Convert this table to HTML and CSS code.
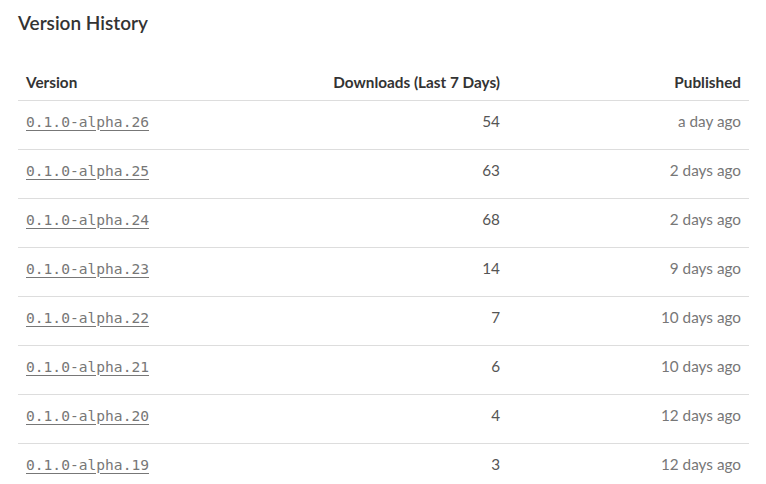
FILE: index.html
```html
<!DOCTYPE html>
<html>
<head>
<meta charset="utf-8">
<link rel="stylesheet" href="styles.css">
</head>
<body>
<section class="versions">
  <h2 class="title">Version History</h2>
  <table class="vtable">
    <colgroup><col class="c1"><col class="c2"><col class="c3"></colgroup>
    <thead>
      <tr><th class="left">Version</th><th class="right">Downloads (Last 7 Days)</th><th class="right">Published</th></tr>
    </thead>
    <tbody>
      <tr><td><a class="ver" href="#">0.1.0-alpha.26</a></td><td class="num">54</td><td class="date">a day ago</td></tr>
      <tr><td><a class="ver" href="#">0.1.0-alpha.25</a></td><td class="num">63</td><td class="date">2 days ago</td></tr>
      <tr><td><a class="ver" href="#">0.1.0-alpha.24</a></td><td class="num">68</td><td class="date">2 days ago</td></tr>
      <tr><td><a class="ver" href="#">0.1.0-alpha.23</a></td><td class="num">14</td><td class="date">9 days ago</td></tr>
      <tr><td><a class="ver" href="#">0.1.0-alpha.22</a></td><td class="num">7</td><td class="date">10 days ago</td></tr>
      <tr><td><a class="ver" href="#">0.1.0-alpha.21</a></td><td class="num">6</td><td class="date">10 days ago</td></tr>
      <tr><td><a class="ver" href="#">0.1.0-alpha.20</a></td><td class="num">4</td><td class="date">12 days ago</td></tr>
      <tr><td><a class="ver" href="#">0.1.0-alpha.19</a></td><td class="num">3</td><td class="date">12 days ago</td></tr>
    </tbody>
  </table>
</section>
</body>
</html>
```

FILE: styles.css
```css
html, body { margin: 0; padding: 0; background: #fff; }
body { font-family: "Lato", "Liberation Sans", sans-serif; color: #333; }
.versions { padding: 10px 17px 0 18px; }
.title { margin: 0; font-size: 19px; font-weight: 600; color: #333; line-height: 26px; }
.vtable { width: 731px; border-collapse: collapse; table-layout: fixed; margin-top: 36px; }
.c1 { width: 240px; }
.c2 { width: 250px; }
.c3 { width: 241px; }
th { font-size: 15.3px; font-weight: 700; color: #333; line-height: 20px; padding: 0 8px 8px; vertical-align: middle; border-bottom: 1px solid #ddd; }
th.left { text-align: left; }
th.right { text-align: right; }
td { height: 40px; line-height: 20px; padding: 0 8px 8px; border-bottom: 1px solid #ddd; font-size: 15.3px; vertical-align: middle; }
.num { text-align: right; color: #555; }
.date { text-align: right; color: #777; }
.ver { font-family: "DejaVu Sans Mono", monospace; font-size: 14.6px; color: #777; text-decoration: underline; text-underline-offset: 3px; }
```
